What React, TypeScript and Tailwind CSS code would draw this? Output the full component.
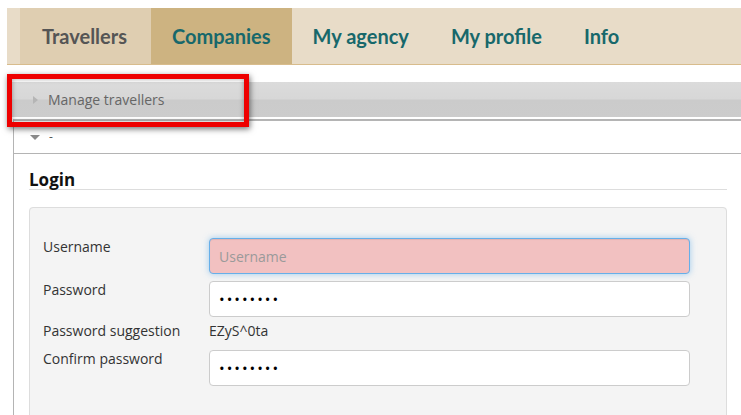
import { useState } from "react";

const NAV_TABS = [
  { label: "Travellers", kind: "first" },
  { label: "Companies", kind: "active" },
  { label: "My agency", kind: "plain" },
  { label: "My profile", kind: "plain" },
  { label: "Info", kind: "plain" },
];

const TAB_STYLES: Record<string, string> = {
  first: "bg-[#dfceb1] text-[#555555] pl-[22px] pr-[24px]",
  active: "bg-[#cdb381] text-[#17686b] px-[21px]",
  plain: "text-[#17686b] px-[21px]",
};

function Field({ label, children }: { label: string; children: React.ReactNode }) {
  return (
    <div className="flex items-start">
      <label className="w-[166px] shrink-0 text-[14px] leading-[18px] text-[#333]">{label}</label>
      <div className="flex-1">{children}</div>
    </div>
  );
}

const inputBase = "w-full h-[36px] rounded-[4px] border px-[9px] outline-none";

export default function App() {
  const [username, setUsername] = useState("");

  return (
    <div
      className="relative w-[741px] h-[415px] overflow-hidden bg-white"
      style={{ fontFamily: "'Open Sans', 'DejaVu Sans', sans-serif" }}
    >
      {/* Main navigation */}
      <nav
        className="mt-2 ml-[7px] h-[57px] flex bg-[#e8dcc8] border-b border-[#d8bc8c] pl-[13px]"
        style={{ fontFamily: "Lato, 'Open Sans', sans-serif" }}
      >
        {NAV_TABS.map((tab) => (
          <a
            key={tab.label}
            className={`flex items-center text-[20px] font-bold ${TAB_STYLES[tab.kind]}`}
          >
            {tab.label}
          </a>
        ))}
      </nav>

      {/* Section header bar */}
      <div className="mt-[17px] ml-[12px] h-[37px] flex items-center bg-[linear-gradient(#dbdbdb_0%,#d7d7d7_48%,#cbcbcb_52%,#cccccc_100%)] border-b-2 border-white">
        <span className="ml-[21px] w-0 h-0 border-y-[4px] border-y-transparent border-l-[5px] border-l-[#b5b5b5]" />
        <span className="ml-[10px] text-[14px] text-[#666]">Manage travellers</span>
      </div>

      {/* Content panel */}
      <div className="ml-[13px] border-t-2 border-l border-[#b4b4b4]">
        <div className="h-[33px] flex items-center border-b border-[#b4b4b4]">
          <span className="ml-[16px] w-0 h-0 border-x-[5px] border-x-transparent border-t-[5px] border-t-[#8a8a8a]" />
          <span className="ml-[9px] text-[12px] text-[#555] leading-none">-</span>
        </div>

        <div className="pl-[15px] pr-[14px]">
          <h2 className="mt-[16px] border-b border-[#dddddd] text-[17px] leading-[19px] font-bold text-[#111]">Login</h2>

          <fieldset className="mt-[17px] h-[220px] rounded-[4px] border border-[#dddddd] bg-[#f4f4f4] pt-[30px] pl-[13px] pr-[36px] flex flex-col">
            <Field label="Username">
              <input
                value={username}
                onChange={(e) => setUsername(e.target.value)}
                placeholder="Username"
                className={`${inputBase} px-[7px] border-[#66afe9] bg-[#f2c1c1] text-[14px] text-[#333] placeholder:text-[#9a9a9a] shadow-[inset_0_1px_1px_rgba(0,0,0,0.075),0_0_6px_rgba(102,175,233,0.6)]`}
              />
            </Field>
            <div className="mt-[7px]">
              <Field label="Password">
                <input
                  type="password"
                  defaultValue="password"
                  className={`${inputBase} border-[#cccccc] bg-white text-[15px] tracking-[2px] text-black`}
                />
              </Field>
            </div>
            <div className="mt-[1px] h-[24px] flex items-center">
              <span className="w-[166px] text-[14px] text-[#333]">Password suggestion</span>
              <span className="text-[14px] text-[#333]">EZyS^0ta</span>
            </div>
            <div className="mt-[8px]">
              <Field label="Confirm password">
                <input
                  type="password"
                  defaultValue="password"
                  className={`${inputBase} border-[#cccccc] bg-white text-[15px] tracking-[2px] text-black`}
                />
              </Field>
            </div>
          </fieldset>
        </div>
      </div>

      {/* Highlight frame over the header bar */}
      <div className="absolute left-[7px] top-[74px] w-[242px] h-[53px] border-[5px] border-[#ee0000] shadow-[1px_2px_6px_rgba(0,0,0,0.55),inset_0_0_5px_rgba(0,0,0,0.35)]" />
    </div>
  );
}
